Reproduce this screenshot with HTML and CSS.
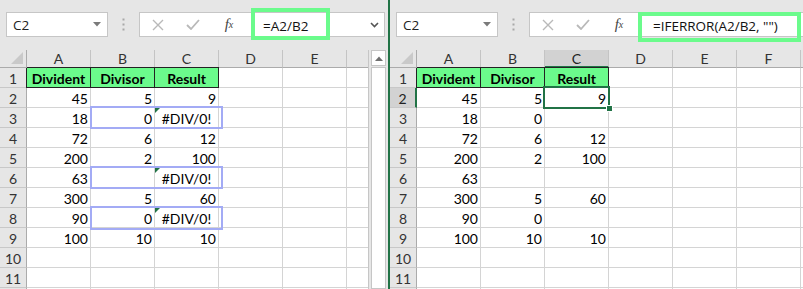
FILE: index.html
```html
<!DOCTYPE html>
<html>
<head>
<meta charset="utf-8">
<link rel="stylesheet" href="styles.css">
</head>
<body>
<div class="app">
  <section class="pane pane-left">
    <div class="topbar">
      <div class="namebox"><span>C2</span><svg width="8" height="5" viewBox="0 0 8 5"><path d="M0 0H8L4 4.5Z" fill="#7a7a7a"/></svg></div>
      <div class="dots"><svg width="3" height="13" viewBox="0 0 3 13"><rect x="0.5" y="0.5" width="2" height="2" fill="#a8a8a8"/><rect x="0.5" y="5.5" width="2" height="2" fill="#a8a8a8"/><rect x="0.5" y="10.5" width="2" height="2" fill="#a8a8a8"/></svg></div>
      <div class="fbar fbar-left">
        <span class="ico"><svg width="12" height="12" viewBox="0 0 12 12"><path d="M1 1L11 11M11 1L1 11" stroke="#b9b9b9" stroke-width="1.4" fill="none"/></svg></span>
        <span class="ico"><svg width="14" height="11" viewBox="0 0 14 11"><path d="M1 6L5 10L13 1" stroke="#b9b9b9" stroke-width="1.8" fill="none"/></svg></span>
        <span class="ico fx">f<sub>x</sub></span>
        <span class="formula">=A2/B2</span>
        <svg class="chev" width="9" height="6" viewBox="0 0 9 6"><path d="M1 1L4.5 4.5L8 1" stroke="#555" stroke-width="1.6" fill="none"/></svg>
        <div class="hl hl-left"></div>
      </div>
    </div>
    <div class="sheet">
      <div class="grid grid-left">
        <div class="c corner"><svg width="12" height="12" viewBox="0 0 12 12"><path d="M12 0V12H0Z" fill="#c9c9c9"/></svg></div>
        <div class="c hdr">A</div><div class="c hdr">B</div><div class="c hdr">C</div><div class="c hdr">D</div><div class="c hdr">E</div><div class="c hdr"></div><div class="c hdr"></div>

        <div class="c rh">1</div><div class="c th th-first">Divident</div><div class="c th">Divisor</div><div class="c th">Result</div><div class="c"></div><div class="c"></div><div class="c"></div><div class="c"></div>
        <div class="c rh">2</div><div class="c n">45</div><div class="c n">5</div><div class="c n">9</div><div class="c"></div><div class="c"></div><div class="c"></div><div class="c"></div>
        <div class="c rh">3</div><div class="c n">18</div><div class="c n">0</div><div class="c e err">#DIV/0!</div><div class="c"></div><div class="c"></div><div class="c"></div><div class="c"></div>
        <div class="c rh">4</div><div class="c n">72</div><div class="c n">6</div><div class="c n">12</div><div class="c"></div><div class="c"></div><div class="c"></div><div class="c"></div>
        <div class="c rh">5</div><div class="c n">200</div><div class="c n">2</div><div class="c n">100</div><div class="c"></div><div class="c"></div><div class="c"></div><div class="c"></div>
        <div class="c rh">6</div><div class="c n">63</div><div class="c n"></div><div class="c e err">#DIV/0!</div><div class="c"></div><div class="c"></div><div class="c"></div><div class="c"></div>
        <div class="c rh">7</div><div class="c n">300</div><div class="c n">5</div><div class="c n">60</div><div class="c"></div><div class="c"></div><div class="c"></div><div class="c"></div>
        <div class="c rh">8</div><div class="c n">90</div><div class="c n">0</div><div class="c e err">#DIV/0!</div><div class="c"></div><div class="c"></div><div class="c"></div><div class="c"></div>
        <div class="c rh">9</div><div class="c n">100</div><div class="c n">10</div><div class="c n">10</div><div class="c"></div><div class="c"></div><div class="c"></div><div class="c"></div>
        <div class="c rh">10</div><div class="c"></div><div class="c"></div><div class="c"></div><div class="c"></div><div class="c"></div><div class="c"></div><div class="c"></div>
        <div class="c rh">11</div><div class="c"></div><div class="c"></div><div class="c"></div><div class="c"></div><div class="c"></div><div class="c"></div><div class="c"></div>
        <div class="c rh"></div><div class="c"></div><div class="c"></div><div class="c"></div><div class="c"></div><div class="c"></div><div class="c"></div><div class="c"></div>

        <div class="mark mark-r3"></div>
        <div class="mark mark-r6"></div>
        <div class="mark mark-r8"></div>
      </div>
      <div class="vscroll">
        <div class="vs-up"><svg width="8" height="5" viewBox="0 0 8 5"><path d="M0 5H8L4 0.5Z" fill="#6f6f6f"/></svg></div>
        <div class="vs-thumb"></div>
      </div>
    </div>
  </section>

  <div class="divider"></div>

  <section class="pane pane-right">
    <div class="topbar">
      <div class="namebox"><span>C2</span><svg width="8" height="5" viewBox="0 0 8 5"><path d="M0 0H8L4 4.5Z" fill="#7a7a7a"/></svg></div>
      <div class="dots"><svg width="3" height="13" viewBox="0 0 3 13"><rect x="0.5" y="0.5" width="2" height="2" fill="#a8a8a8"/><rect x="0.5" y="5.5" width="2" height="2" fill="#a8a8a8"/><rect x="0.5" y="10.5" width="2" height="2" fill="#a8a8a8"/></svg></div>
      <div class="fbar fbar-right">
        <span class="ico"><svg width="12" height="12" viewBox="0 0 12 12"><path d="M1 1L11 11M11 1L1 11" stroke="#b9b9b9" stroke-width="1.4" fill="none"/></svg></span>
        <span class="ico"><svg width="14" height="11" viewBox="0 0 14 11"><path d="M1 6L5 10L13 1" stroke="#b9b9b9" stroke-width="1.8" fill="none"/></svg></span>
        <span class="ico fx">f<sub>x</sub></span>
        <span class="formula">=IFERROR(A2/B2, "")</span>
        <div class="hl hl-right"></div>
      </div>
    </div>
    <div class="sheet">
      <div class="grid grid-right">
        <div class="c corner"><svg width="12" height="12" viewBox="0 0 12 12"><path d="M12 0V12H0Z" fill="#c9c9c9"/></svg></div>
        <div class="c hdr">A</div><div class="c hdr">B</div><div class="c hdr hdr-sel">C</div><div class="c hdr">D</div><div class="c hdr">E</div><div class="c hdr">F</div><div class="c hdr"></div>

        <div class="c rh">1</div><div class="c th th-first">Divident</div><div class="c th">Divisor</div><div class="c th">Result</div><div class="c"></div><div class="c"></div><div class="c"></div><div class="c"></div>
        <div class="c rh rh-sel">2</div><div class="c n">45</div><div class="c n">5</div><div class="c n">9</div><div class="c"></div><div class="c"></div><div class="c"></div><div class="c"></div>
        <div class="c rh">3</div><div class="c n">18</div><div class="c n">0</div><div class="c n"></div><div class="c"></div><div class="c"></div><div class="c"></div><div class="c"></div>
        <div class="c rh">4</div><div class="c n">72</div><div class="c n">6</div><div class="c n">12</div><div class="c"></div><div class="c"></div><div class="c"></div><div class="c"></div>
        <div class="c rh">5</div><div class="c n">200</div><div class="c n">2</div><div class="c n">100</div><div class="c"></div><div class="c"></div><div class="c"></div><div class="c"></div>
        <div class="c rh">6</div><div class="c n">63</div><div class="c n"></div><div class="c n"></div><div class="c"></div><div class="c"></div><div class="c"></div><div class="c"></div>
        <div class="c rh">7</div><div class="c n">300</div><div class="c n">5</div><div class="c n">60</div><div class="c"></div><div class="c"></div><div class="c"></div><div class="c"></div>
        <div class="c rh">8</div><div class="c n">90</div><div class="c n">0</div><div class="c n"></div><div class="c"></div><div class="c"></div><div class="c"></div><div class="c"></div>
        <div class="c rh">9</div><div class="c n">100</div><div class="c n">10</div><div class="c n">10</div><div class="c"></div><div class="c"></div><div class="c"></div><div class="c"></div>
        <div class="c rh">10</div><div class="c"></div><div class="c"></div><div class="c"></div><div class="c"></div><div class="c"></div><div class="c"></div><div class="c"></div>
        <div class="c rh">11</div><div class="c"></div><div class="c"></div><div class="c"></div><div class="c"></div><div class="c"></div><div class="c"></div><div class="c"></div>
        <div class="c rh"></div><div class="c"></div><div class="c"></div><div class="c"></div><div class="c"></div><div class="c"></div><div class="c"></div><div class="c"></div>

        <div class="sel"><span class="handle"></span></div>
      </div>
    </div>
  </section>
</div>
</body>
</html>
```

FILE: styles.css
```css
* { box-sizing: border-box; }
html, body { margin: 0; padding: 0; }
body {
  width: 803px;
  height: 289px;
  overflow: hidden;
  background: #e6e6e6;
  font-family: Lato, "Liberation Sans", sans-serif;
}
.app { display: flex; height: 289px; }
.pane { display: flex; flex-direction: column; overflow: hidden; position: relative; }
.pane-left { width: 388px; flex: none; }
.divider { width: 2px; flex: none; background: #217346; }
.pane-right { flex: 1; min-width: 0; }

/* formula bar area */
.topbar {
  height: 50px;
  flex: none;
  display: flex;
  align-items: flex-start;
  padding: 12px 0 0 6px;
}
.namebox {
  width: 102px;
  height: 25px;
  flex: none;
  background: #fff;
  border: 1px solid #c6c6c6;
  display: flex;
  align-items: center;
  justify-content: space-between;
  padding: 0 6px 0 6px;
  font-family: "Open Sans", sans-serif;
  font-size: 13.5px;
  color: #222;
}
.dots {
  width: 31px;
  height: 25px;
  flex: none;
  display: flex;
  align-items: center;
  justify-content: center;
}
.fbar {
  position: relative;
  height: 25px;
  background: #fff;
  border: 1px solid #c6c6c6;
  display: flex;
  align-items: center;
  flex: 1;
  min-width: 0;
}
.fbar-left { margin-right: 3px; }
.fbar-right { margin-right: -30px; }
.ico {
  width: 36px;
  flex: none;
  display: flex;
  align-items: center;
  justify-content: center;
}
.ico:first-child { width: 35px; }
.fx {
  font-family: "Liberation Serif", serif;
  font-style: italic;
  font-size: 15px;
  color: #444;
  line-height: 1;
}
.fx sub { font-size: 10px; vertical-align: -1px; }
.formula {
  margin-left: 16px;
  margin-top: 2px;
  font-family: "Open Sans", sans-serif;
  font-size: 13.5px;
  color: #111;
  white-space: nowrap;
}
.chev { margin-left: auto; margin-right: 5px; flex: none; }
.hl {
  position: absolute;
  border: 4px solid #6bfb8c;
}
.hl-left { left: 111px; top: -5px; width: 79px; height: 32px; }
.hl-right { left: 108px; top: -1px; width: 163px; height: 30px; }

/* sheet */
.sheet { display: flex; flex: 1; min-height: 0; background: #fff; }
.grid {
  position: relative;
  display: grid;
  grid-template-columns: 27px repeat(7, 64px);
  grid-template-rows: 18px repeat(12, 20px);
  overflow: hidden;
  background: #fff;
}
.grid-left { width: 368px; flex: none; }
.grid-right { flex: 1; min-width: 0; }

.c {
  position: relative;
  border-right: 1px solid #d4d4d4;
  border-bottom: 1px solid #d4d4d4;
  font-size: 14px;
  line-height: 21px;
  padding: 0 2px;
  white-space: nowrap;
  overflow: hidden;
  color: #000;
}
.n { text-align: right; }
.e { text-align: center; }
.err::before {
  content: "";
  position: absolute;
  top: 0;
  left: 0;
  border-top: 5px solid #217346;
  border-right: 5px solid transparent;
}
.corner {
  background: #e6e6e6;
  border-right-color: #ababab;
  border-bottom-color: #ababab;
  display: flex;
  align-items: flex-end;
  justify-content: flex-end;
  padding: 0 3px 3px 0;
}
.hdr {
  background: #e6e6e6;
  border-right-color: #c4c4c4;
  border-bottom-color: #ababab;
  text-align: center;
  color: #333;
  line-height: 18px;
}
.hdr-sel {
  background: #d2d2d2;
  border-bottom: 2px solid #217346;
  color: #222;
}
.rh {
  background: #e6e6e6;
  border-right-color: #ababab;
  border-bottom-color: #c8c8c8;
  text-align: center;
  color: #333;
  padding: 0;
}
.rh-sel {
  background: #d2d2d2;
  border-right: 2px solid #217346;
  color: #222;
}
.th {
  background: #6bfb8c;
  font-weight: 700;
  text-align: center;
  border-right-color: #222;
  border-bottom-color: #222;
  box-shadow: 0 -1px 0 #222;
  overflow: visible;
}
.th-first { box-shadow: 0 -1px 0 #222, -1px 0 0 #222; }

/* annotations */
.mark {
  position: absolute;
  left: 90px;
  width: 133px;
  height: 23px;
  border: 2px solid #a3abf5;
}
.mark-r3 { top: 56px; }
.mark-r6 { top: 116px; }
.mark-r8 { top: 156px; height: 24px; }

.sel {
  position: absolute;
  left: 153px;
  top: 36px;
  width: 67px;
  height: 23px;
  border: 2px solid #217346;
}
.handle {
  position: absolute;
  right: -5px;
  bottom: -5px;
  width: 7px;
  height: 7px;
  background: #217346;
  border: 1px solid #fff;
}

/* scrollbar */
.vscroll {
  width: 20px;
  flex: none;
  background: #e6e6e6;
  border-left: 1px solid #c6c6c6;
  display: flex;
  flex-direction: column;
  align-items: center;
}
.vs-up {
  width: 15px;
  height: 16px;
  flex: none;
  background: #fff;
  border: 1px solid #c6c6c6;
  display: flex;
  align-items: center;
  justify-content: center;
}
.vs-thumb {
  width: 15px;
  flex: 1;
  margin-top: 1px;
  background: #fff;
  border: 1px solid #c6c6c6;
}
```
